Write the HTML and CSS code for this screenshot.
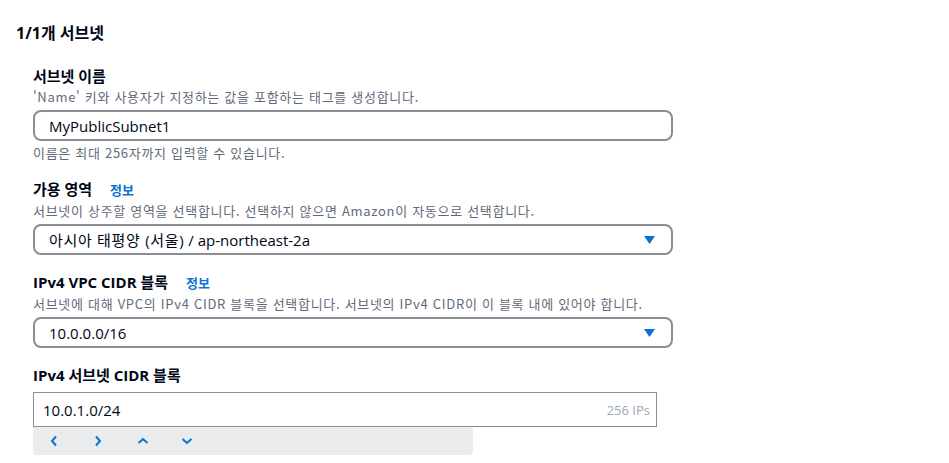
FILE: index.html
```html
<!DOCTYPE html>
<html lang="ko">

<head>
    <meta charset="UTF-8">
    <meta name="viewport" content="width=device-width, initial-scale=1.0">
    <title>서브넷 생성</title>
    <link rel="stylesheet" href="styles.css">
</head>

<body>
    <h2 class="count">1/1개 서브넷</h2>

    <div class="subnet">
        <div class="field">
            <label class="label">서브넷 이름</label>
            <p class="desc">'Name' 키와 사용자가 지정하는 값을 포함하는 태그를 생성합니다.</p>
            <div class="box">MyPublicSubnet1</div>
            <p class="hint">이름은 최대 256자까지 입력할 수 있습니다.</p>
        </div>

        <div class="field">
            <label class="label">가용 영역 <a class="info" href="#">정보</a></label>
            <p class="desc">서브넷이 상주할 영역을 선택합니다. 선택하지 않으면 Amazon이 자동으로 선택합니다.</p>
            <div class="box select">
                <span><span class="ko">아시아 태평양 (서울)</span> / ap-northeast-2a</span>
                <svg class="caret" width="11" height="8" viewBox="0 0 11 8"><path d="M0 0h11L5.5 8z" fill="#0972d3"/></svg>
            </div>
        </div>

        <div class="field">
            <label class="label">IPv4 VPC CIDR 블록 <a class="info" href="#">정보</a></label>
            <p class="desc">서브넷에 대해 VPC의 IPv4 CIDR 블록을 선택합니다. 서브넷의 IPv4 CIDR이 이 블록 내에 있어야 합니다.</p>
            <div class="box select">
                <span>10.0.0.0/16</span>
                <svg class="caret" width="11" height="8" viewBox="0 0 11 8"><path d="M0 0h11L5.5 8z" fill="#0972d3"/></svg>
            </div>
        </div>

        <div class="field">
            <label class="label">IPv4 서브넷 CIDR 블록</label>
            <div class="cidr">
                <span>10.0.1.0/24</span>
                <span class="ips">256 IPs</span>
            </div>
            <div class="stepper">
                <button><svg width="10" height="12" viewBox="0 0 10 12"><path d="M7 1.5L3 6l4 4.5" fill="none" stroke="#0972d3" stroke-width="2"/></svg></button>
                <button><svg width="10" height="12" viewBox="0 0 10 12"><path d="M3 1.5L7 6l-4 4.5" fill="none" stroke="#0972d3" stroke-width="2"/></svg></button>
                <button><svg width="12" height="10" viewBox="0 0 12 10"><path d="M1.5 7L6 3l4.5 4" fill="none" stroke="#0972d3" stroke-width="2"/></svg></button>
                <button><svg width="12" height="10" viewBox="0 0 12 10"><path d="M1.5 3L6 7l4.5-4" fill="none" stroke="#0972d3" stroke-width="2"/></svg></button>
            </div>
        </div>
    </div>
</body>

</html>
```

FILE: styles.css
```css
* {
    margin: 0;
    padding: 0;
    box-sizing: border-box;
}

body {
    font-family: "Open Sans", "Noto Sans CJK KR", sans-serif;
    color: #000716;
    background: #fff;
    padding: 22px 0 0 16px;
}

.count {
    font-size: 16px;
    font-weight: 700;
    line-height: 22px;
}

/* 서브넷 입력 영역 */
.subnet {
    padding: 21px 0 0 17px;
    width: 657px;
    display: flex;
    flex-direction: column;
    gap: 16px;
}

.label {
    display: block;
    font-size: 15px;
    font-weight: 700;
    line-height: 22px;
}

.info {
    color: #0972d3;
    font-size: 13px;
    text-decoration: none;
    margin-left: 14px;
}

.desc,
.hint {
    font-family: "Noto Sans CJK KR", sans-serif;
    font-size: 13px;
    letter-spacing: 0.7px;
    color: #5f6b7a;
}

.desc {
    line-height: 20px;
    margin-bottom: 3px;
}

.hint {
    line-height: 18px;
    margin-top: 3px;
}

.box {
    height: 31px;
    border: 2px solid #8c8c94;
    border-radius: 8px;
    padding: 0 14px;
    font-size: 15px;
    display: flex;
    align-items: center;
    justify-content: space-between;
}

.ko {
    letter-spacing: 0.7px;
}

.caret {
    margin-right: 2px;
}

.cidr {
    margin-top: 6px;
    width: 624px;
    height: 35px;
    border: 1px solid #8c8c94;
    padding: 0 6px 0 9px;
    font-size: 15px;
    display: flex;
    align-items: center;
    justify-content: space-between;
}

.ips {
    font-size: 13px;
    color: #9ba7b6;
}

.stepper {
    width: 440px;
    height: 28px;
    background: #e9ebed;
    border-radius: 0 0 4px 4px;
    display: flex;
    align-items: center;
    padding-left: 10px;
}

.stepper button {
    border: none;
    background: none;
    width: 44px;
    height: 28px;
    display: flex;
    align-items: center;
    justify-content: flex-start;
    padding-left: 6px;
}
```
